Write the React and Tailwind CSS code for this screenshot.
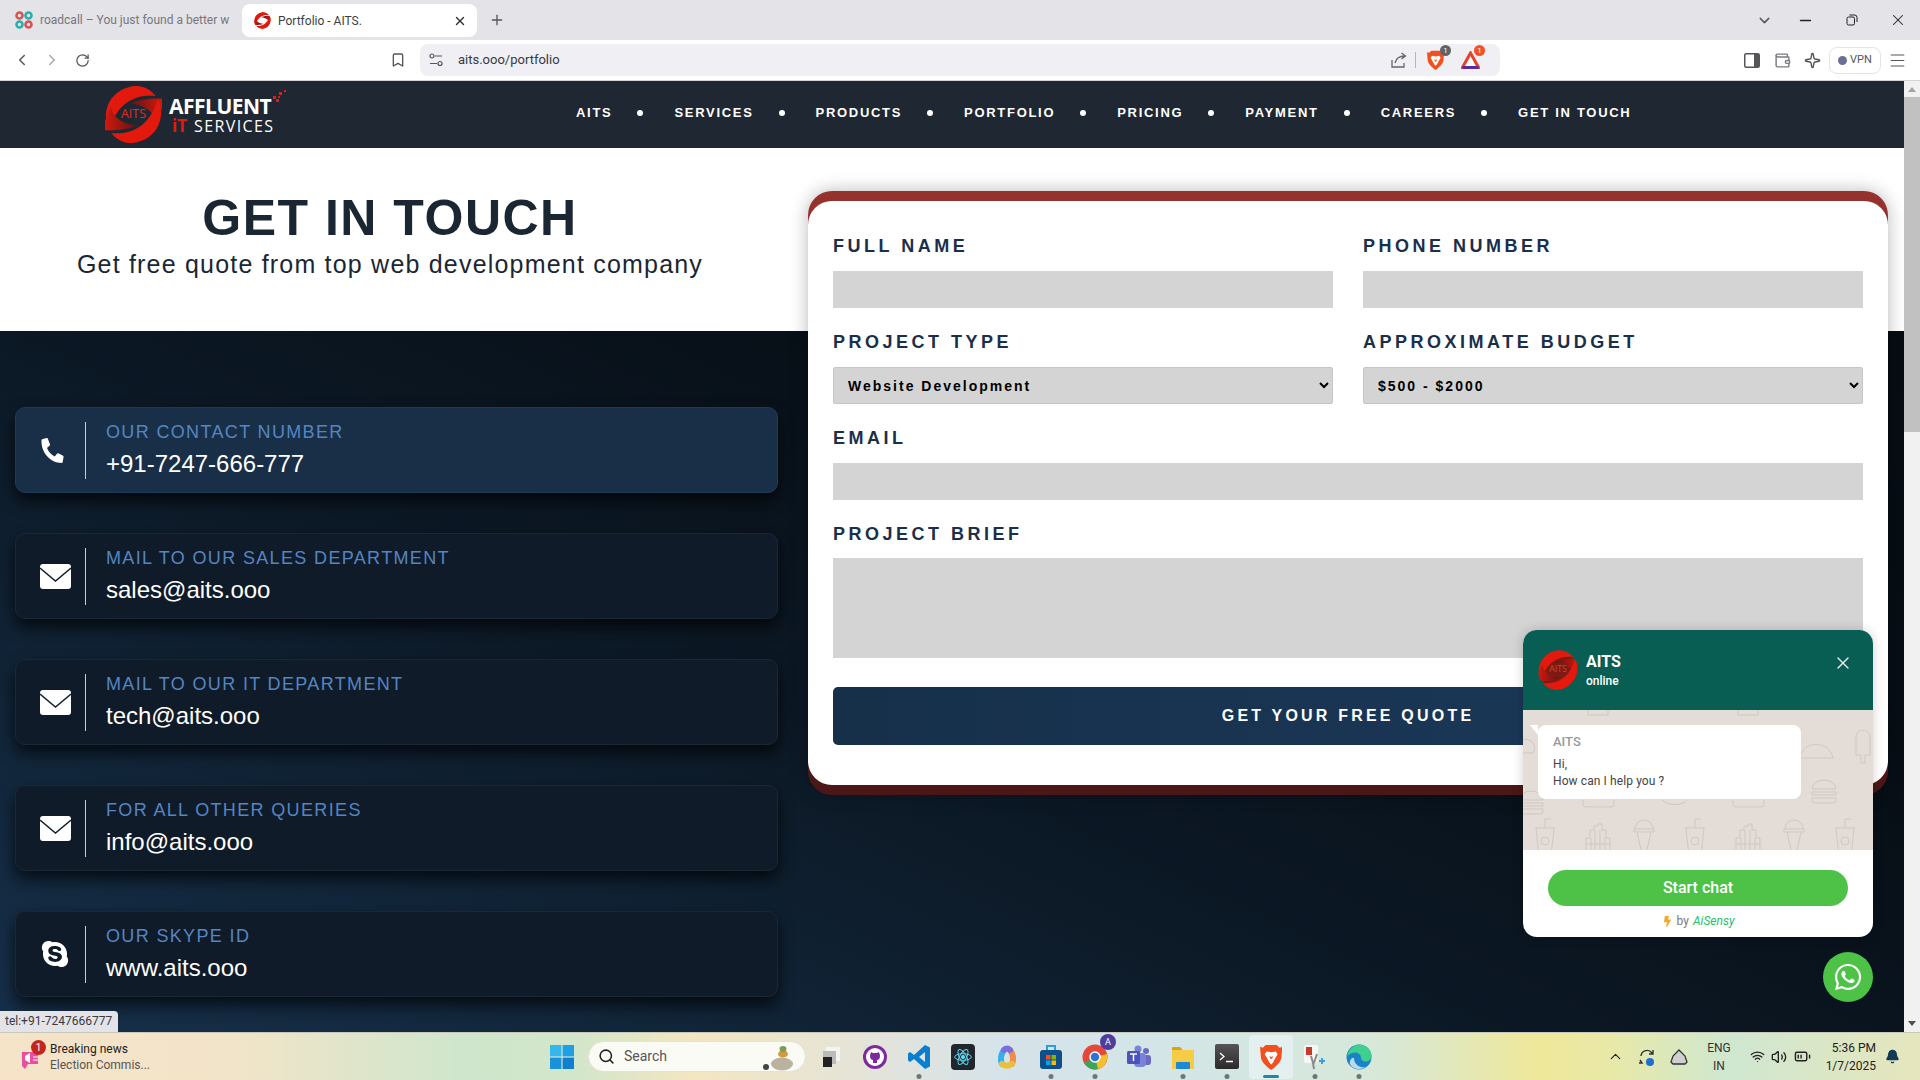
import { FaSkype, FaPhoneAlt, FaWhatsapp, FaBolt } from "react-icons/fa";
import { ChevronLeft, ChevronRight, RotateCw, Bookmark, Plus, X, Minus, ChevronDown, ChevronUp, Search, Volume2, Wifi, BatteryMedium, Bell, Menu, Wallet, Sparkle } from "lucide-react";

const navItems = ["AITS", "SERVICES", "PRODUCTS", "PORTFOLIO", "PRICING", "PAYMENT", "CAREERS", "GET IN TOUCH"];

const contacts = [
  { icon: "phone", label: "OUR CONTACT NUMBER", value: "+91-7247-666-777", active: true },
  { icon: "mail", label: "MAIL TO OUR SALES DEPARTMENT", value: "sales@aits.ooo" },
  { icon: "mail", label: "MAIL TO OUR IT DEPARTMENT", value: "tech@aits.ooo" },
  { icon: "mail", label: "FOR ALL OTHER QUERIES", value: "info@aits.ooo" },
  { icon: "skype", label: "OUR SKYPE ID", value: "www.aits.ooo" },
];

function LogoMark({ size = 58, lens = "none", text = "#e8281a" }) {
  return (
    <div className="relative shrink-0" style={{ width: size, height: size }}>
      <svg width={size} height={size} viewBox="0 0 170 170" className="block">
        <defs>
          <linearGradient id="wing" x1="0" y1="0" x2="1" y2="0">
            <stop offset="0" stopColor="#5c1412" />
            <stop offset="1" stopColor="#d5180c" />
          </linearGradient>
        </defs>
        {lens !== "none" && <circle cx="85" cy="85" r="80" fill={lens} />}
        <g>
          <path d="M12 132C-12 82 10 10 88 0c26-2 50 12 63 30C100 25 40 40 12 132Z" fill="#e3190d" />
          <path d="M72 52c32-12 66-16 98-14 5 24-5 48-20 68 0-26-30-50-78-54Z" fill="url(#wing)" />
        </g>
        <g transform="rotate(180 85 85)">
          <path d="M12 132C-12 82 10 10 88 0c26-2 50 12 63 30C100 25 40 40 12 132Z" fill="#e3190d" />
          <path d="M72 52c32-12 66-16 98-14 5 24-5 48-20 68 0-26-30-50-78-54Z" fill="url(#wing)" />
        </g>
      </svg>
      {size > 20 && (
        <span className="absolute inset-0 flex items-center justify-center font-['Open_Sans',sans-serif]" style={{ color: text, fontSize: size * 0.218 }}>AITS</span>
      )}
    </div>
  );
}

function MailIcon() {
  return (
    <svg width="31" height="25" viewBox="0 0 31 25">
      <rect x="0" y="0" width="31" height="25" rx="3" fill="#fff" />
      <path d="M0 4l15.5 13L31 4" fill="none" stroke="#10202e" strokeWidth="1.4" />
    </svg>
  );
}

function ContactCard({ item }) {
  return (
    <div className={`h-[86px] rounded-[10px] border flex items-center pl-[24px] shadow-[0_8px_16px_rgba(0,0,0,0.7)] ${item.active ? "bg-[#182f47] border-[#1e3a56]" : "bg-[#0f1b28] border-[#1a2836]"}`}>
      <div className="w-[45px] shrink-0 flex items-center text-white">
        {item.icon === "phone" && <FaPhoneAlt size={25} className="scale-x-[0.9]" />}
        {item.icon === "mail" && <MailIcon />}
        {item.icon === "skype" && <FaSkype size={30} />}
      </div>
      <div className="w-px h-[57px] bg-[#c9ced4]" />
      <div className="pl-[20px] pb-[1px]">
        <p className="text-[18px] leading-[22px] tracking-[1.35px] text-[#5585c2]">{item.label}</p>
        <p className="text-[24px] leading-[30px] mt-[6px] text-white">{item.value}</p>
      </div>
    </div>
  );
}

function FormLabel({ children }) {
  return <label className="block h-[24px] leading-[24px] mb-[13px] text-[18px] font-bold tracking-[3.5px] text-[#1a2f4a]">{children}</label>;
}

function TextField({ label }) {
  return (
    <div>
      <FormLabel>{label}</FormLabel>
      <input type="text" className="block w-full h-[37px] bg-[#d4d4d4]" />
    </div>
  );
}

function SelectField({ label, options }) {
  return (
    <div>
      <FormLabel>{label}</FormLabel>
      <select className="block w-full h-[37px] bg-[#d4d4d4] border border-[#c6c6c6] rounded-[2px] pl-[10px] text-[14px] font-bold tracking-[2px] text-black">
        {options.map((o) => <option key={o}>{o}</option>)}
      </select>
    </div>
  );
}

function TaskIcon({ children, dot, active }) {
  return (
    <div className={`relative w-[44px] h-[44px] flex items-center justify-center ${active ? "bg-[#e4f0f0] rounded-[4px]" : ""}`}>
      {children}
      {dot && <span className="absolute bottom-0 left-1/2 -translate-x-1/2 w-[5px] h-[5px] rounded-full bg-[#6f7675]" />}
      {active && <span className="absolute bottom-[1px] left-1/2 -translate-x-1/2 w-[16px] h-[3px] rounded-full bg-[#1c8a9e]" />}
    </div>
  );
}

function BraveIcon({ size = 24 }) {
  return (
    <svg width={size * 0.86} height={size} viewBox="0 0 24 28">
      <path d="M6 1h12l3 3 3-1-1 12c-1 5-7 10-11 13C8 25 2 20 1 15L0 3l3 1Z" fill="#f4501e" />
      <path d="M7 8l5 1 5-1 2 3-3 5-2 4-2 2-2-2-2-4-3-5Z" fill="#fff" />
      <path d="M10 13l2 1 2-1-1 3h-2Z" fill="#f4501e" />
    </svg>
  );
}

function FoodPattern() {
  const cup = (x, y) => (
    <g key={`c${x}${y}`} transform={`translate(${x} ${y})`}>
      <path d="M-10 6h20M-9 6l3 28h12l3-28M0 6V-3h6" />
      <circle cx="0" cy="19" r="4" />
    </g>
  );
  const fries = (x, y) => (
    <g key={`f${x}${y}`} transform={`translate(${x} ${y})`}>
      <path d="M-12 28V14h4V6h4V2h4V0h4v6h4v8h4v14M-7 28V14M-3 28V6M2 28V6M7 28V14M-12 20h24" />
    </g>
  );
  const cone = (x, y) => (
    <g key={`i${x}${y}`} transform={`translate(${x} ${y})`}>
      <path d="M-9 8a9 9 0 0 1 18 0M-10 8h20v3h-20ZM-7 11l5 22h4l5-22" />
    </g>
  );
  const burger = (x, y) => (
    <g key={`b${x}${y}`} transform={`translate(${x} ${y})`}>
      <path d="M-12 0a12 9 0 0 1 24 0ZM-12 3h24v3h-24ZM-12 9h24v2a3 3 0 0 1-3 3h-18a3 3 0 0 1-3-3Z" />
    </g>
  );
  return (
    <svg className="absolute inset-0" width="350" height="140" viewBox="0 0 350 140" fill="none" stroke="#cfc8c1" strokeWidth="1">
      {cup(22, 112)}{fries(75, 114)}{cone(121, 111)}{cup(172, 112)}{fries(225, 114)}{cone(271, 111)}{cup(322, 112)}
      {burger(8, 90)}{burger(301, 79)}
      <path d="M277 48c2-18 30-18 33 0ZM0 43h10c3-5 2-10-4-13-2-1-4-1-6 0" />
      <path d="M333 45V27c0-9 14-9 14 0v18h-5v8h-4v-8Z" />
      <path d="M65 0v5h20V0M215 0v5h20V0" />
      <path d="M60 90v4a3 3 0 0 0 3 3h25a3 3 0 0 0 3-3v-4M210 90v4a3 3 0 0 0 3 3h25a3 3 0 0 0 3-3v-4M140 90c2 6 22 6 24 0" />
    </svg>
  );
}

function ChatWidget() {
  return (
    <div className="absolute left-[1523px] top-[549px] w-[350px] h-[307px] rounded-[14px] overflow-hidden bg-white shadow-[0_0_12px_rgba(0,0,0,0.18)] font-['Roboto',sans-serif]">
      <div className="h-[80px] bg-[#095e54] flex items-center pl-[15px] pr-[20px]">
        <div className="w-[40px] h-[40px] rounded-full overflow-hidden">
          <LogoMark size={40} lens="#7d1a12" text="#d0402f" />
        </div>
        <div className="ml-[8px] mt-[2px] flex-1 text-white">
          <p className="text-[16px] leading-[20px] font-bold">AITS</p>
          <p className="text-[12px] leading-[18px] font-medium">online</p>
        </div>
        <X size={20} className="text-[#e8efee] -mt-[14px]" strokeWidth={1.6} />
      </div>
      <div className="relative h-[140px] bg-[#e4dcd6]">
        <FoodPattern />
        <div className="absolute left-[7px] top-[15px] w-0 h-0 border-t-[10px] border-t-white border-l-[8px] border-l-transparent" />
        <div className="absolute left-[15px] top-[15px] w-[263px] h-[74px] bg-white rounded-[8px] pl-[15px] pt-[8px]">
          <p className="text-[13px] leading-[18px] font-medium text-[#999]">AITS</p>
          <p className="text-[12px] leading-[17px] mt-[5px] tracking-[0.1px] text-[#444]">Hi,<br />How can I help you ?</p>
        </div>
      </div>
      <div className="pt-[20px]">
        <div className="mx-[25px] h-[36px] rounded-full bg-[#4dc247] flex items-center justify-center text-white text-[16px] font-medium">Start chat</div>
        <p className="mt-[6px] flex items-center justify-center gap-[4px] text-[12px] text-[#777]">
          <FaBolt size={11} className="text-[#f7a825]" />by <span className="italic text-[#25c16f]">AiSensy</span>
        </p>
      </div>
    </div>
  );
}

function BrowserChrome() {
  return (
    <div className="shrink-0 font-['Roboto',sans-serif]">
      <div className="h-[40px] bg-[#e3e3e8] flex items-center pl-[14px] pr-[13px]">
        <div className="w-[228px] flex items-center">
          <svg width="18" height="18" viewBox="0 0 18 18" className="shrink-0 ml-[1px]" fill="none" strokeWidth="2.6">
            <circle cx="4.5" cy="4.5" r="3" stroke="#d9534f" />
            <circle cx="13.5" cy="4.5" r="3" stroke="#2bb0ad" />
            <circle cx="4.5" cy="13.5" r="3" stroke="#2bb0ad" />
            <circle cx="13.5" cy="13.5" r="3" stroke="#d9534f" />
          </svg>
          <span className="ml-[7px] text-[12px] text-[#77777c] whitespace-nowrap">roadcall – You just found a better w</span>
        </div>
        <div className="w-[235px] h-[33px] bg-white rounded-[8px] flex items-center pl-[12px] pr-[10px] mt-[1px]">
          <div className="w-[17px] h-[17px] rounded-full overflow-hidden shrink-0"><LogoMark size={17} lens="#fff" /></div>
          <span className="ml-[7px] flex-1 text-[12px] text-[#3d3d42]">Portfolio - AITS.</span>
          <X size={14} strokeWidth={2.4} className="text-[#333]" />
        </div>
        <Plus size={16} className="ml-[12px] text-[#55555a]" />
        <div className="flex-1" />
        <ChevronDown size={17} className="text-[#55555a]" />
        <Minus size={17} className="ml-[24px] text-[#222]" />
        <svg width="12" height="12" viewBox="0 0 12 12" className="ml-[32px]" fill="none" stroke="#222"><rect x="1" y="3" width="7.5" height="8" rx="1.5" /><path d="M3.5 1h5A2.5 2.5 0 0 1 11 3.5V8" /></svg>
        <X size={18} strokeWidth={1.4} className="ml-[31px] text-[#222]" />
      </div>
      <div className="h-[41px] bg-white border-b border-[#d4d4d8] flex items-center pl-[13px]">
        <ChevronLeft size={18} className="text-[#55555a]" />
        <ChevronRight size={18} className="ml-[12px] text-[#a8a8ad]" />
        <RotateCw size={15} className="ml-[14px] text-[#55555a]" />
        <Bookmark size={16} className="ml-[300px] text-[#55555a]" />
        <div className="ml-[14px] w-[1080px] h-[32px] bg-[#efeff4] rounded-[8px] flex items-center pl-[9px] pr-[20px]">
          <svg width="14" height="14" viewBox="0 0 14 14" fill="none" stroke="#55555a" strokeWidth="1.2"><circle cx="3" cy="3" r="2" /><path d="M6 3h7M1 10.500h7" /><circle cx="11" cy="10.500" r="2" /></svg>
          <span className="ml-[15px] flex-1 text-[13px] text-[#3a3a40]">aits.ooo/portfolio</span>
          <svg width="18" height="17" viewBox="0 0 18 17" fill="none" stroke="#66666b" strokeWidth="1.300"><path d="M2 8v7h12v-4M5 11c1-5 4-7 10-7M11.500 1l4 3-4 3" /></svg>
          <span className="ml-[7px] w-px h-[16px] bg-[#b5b5ba]" />
          <div className="relative ml-[11px]">
            <BraveIcon size={20} />
            <span className="absolute -top-[5px] -right-[7px] w-[11px] h-[11px] rounded-full bg-[#62626a] text-white text-[8px] leading-[11px] text-center">1</span>
          </div>
          <div className="relative ml-[17px]">
            <svg width="19" height="18" viewBox="0 0 19 18"><path d="M9.5 2L17.5 16.5H1.5Z" fill="#fff" stroke="#e5432d" strokeWidth="3" /><path d="M1.5 16.5h16" stroke="#5d2a9c" strokeWidth="3" /></svg>
            <span className="absolute -top-[6px] -right-[5px] w-[11px] h-[11px] rounded-full bg-[#f4502c] text-white text-[8px] leading-[11px] text-center">1</span>
          </div>
        </div>
        <svg width="16" height="15" viewBox="0 0 16 15" className="ml-[244px]" fill="none"><rect x="0.75" y="0.75" width="14.5" height="13.5" rx="1.5" stroke="#55555a" strokeWidth="1.5" /><rect x="10" y="1" width="5" height="13" fill="#55555a" /></svg>
        <Wallet size={17} className="ml-[14px] text-[#7a7a80]" />
        <Sparkle size={17} className="ml-[13px] text-[#55555a]" />
        <div className="ml-[8px] w-[52px] h-[27px] rounded-[8px] border border-[#e3e3e8] flex items-center justify-center gap-[3px]">
          <span className="w-[9px] h-[9px] rounded-full bg-[#6c6f94]" />
          <span className="text-[11px] text-[#55555a]">VPN</span>
        </div>
        <Menu size={19} strokeWidth={1.4} className="ml-[7px] text-[#55555a]" />
      </div>
    </div>
  );
}

function Taskbar() {
  return (
    <div className="shrink-0 h-[48px] flex items-center border-t border-[#c8c8b8] bg-[linear-gradient(90deg,#f6e3c8_0%,#f2e4c8_12%,#cfe6cc_24%,#d2e6cb_30%,#f3e6c0_36%,#e6e4d6_44%,#d6e3ea_52%,#d3e6e6_62%,#d8e8d8_72%,#efe89a_80%,#e8e9a8_84%,#cfe7d0_90%,#e6e6bc_100%)] font-['Roboto',sans-serif]">
      <div className="w-[550px] pl-[20px] flex items-center shrink-0">
        <div className="relative w-[30px] h-[30px] shrink-0">
          <svg width="22" height="24" viewBox="0 0 22 24" className="absolute left-0 top-[5px]"><path d="M2 5h16v12H8l-3 5-3-3Z" fill="#e84fa0" /><path d="M5 9l5-3v10l-5-3Z" fill="#fff" /><path d="M13 10h5M13 13h5" stroke="#fff" /></svg>
          <span className="absolute left-[11px] top-[-2px] w-[15px] h-[15px] rounded-full bg-[#c4261d] text-white text-[10px] leading-[15px] text-center">1</span>
        </div>
        <div className="ml-[0px] text-[12px] leading-[16px] text-[#222]">
          <p>Breaking news</p>
          <p className="text-[#555]">Election Commis...</p>
        </div>
      </div>
      <svg width="24" height="24" viewBox="0 0 24 24" className="shrink-0"><rect width="11.4" height="11.4" fill="#36b6ef" /><rect x="12.6" width="11.4" height="11.4" fill="#1f9fe6" /><rect y="12.6" width="11.4" height="11.4" fill="#1b90db" /><rect x="12.6" y="12.6" width="11.4" height="11.4" fill="#0f7fcf" /></svg>
      <div className="ml-[14px] w-[218px] h-[31px] rounded-full bg-[#fbfbf5] border border-[#e2e2d6] flex items-center pl-[9px] pr-[10px]">
        <Search size={17} strokeWidth={2.2} className="text-[#222]" />
        <span className="ml-[9px] flex-1 text-[14px] text-[#555]">Search</span>
        <svg width="36" height="28" viewBox="0 0 36 28"><ellipse cx="23" cy="21" rx="11" ry="6.5" fill="#b9b29f" /><ellipse cx="24" cy="11" rx="5" ry="3.5" fill="#d19a3e" /><ellipse cx="24" cy="6" rx="3.5" ry="3" fill="#7f9b5a" /><circle cx="7" cy="24" r="3" fill="#444" /></svg>
      </div>
      <div className="ml-[3px] flex items-center">
        <TaskIcon><svg width="22" height="22" viewBox="0 0 22 22"><rect x="6" y="1" width="14" height="14" rx="1" fill="#f4f4f0" /><rect x="3" y="5" width="13" height="13" fill="#bbb" /><rect x="3" y="11" width="9" height="10" fill="#222" /></svg></TaskIcon>
        <TaskIcon><svg width="24" height="24" viewBox="0 0 24 24"><circle cx="12" cy="12" r="10.5" fill="#fff" stroke="#7c2a9e" strokeWidth="3" /><path d="M7 11c0-2 1-3 1-4l2 1h4l2-1c0 1 1 2 1 4 0 3-2 4-3 4v3h-4v-3c-1 0-3-1-3-4Z" fill="#7c2a9e" /></svg></TaskIcon>
        <TaskIcon dot><svg width="24" height="26" viewBox="0 0 24 26"><path d="M18 1l5 2.5v19L18 25 7 15l-4 3-2-1.5V9.500L3 8l4 3Zm0 7l-6 5 6 5Z" fill="#0a7fd0" /></svg></TaskIcon>
        <TaskIcon><div className="w-[24px] h-[26px] rounded-[4px] bg-[#20262c] flex items-center justify-center"><svg width="20" height="20" viewBox="-12 -12 24 24" fill="none" stroke="#5fd3ee" strokeWidth="1.2"><ellipse rx="10" ry="4" /><ellipse rx="10" ry="4" transform="rotate(60)" /><ellipse rx="10" ry="4" transform="rotate(120)" /><circle r="2" fill="#5fd3ee" /></svg></div></TaskIcon>
        <TaskIcon><svg width="24" height="24" viewBox="0 0 24 24" fill="none" strokeWidth="6" strokeLinecap="round"><path d="M9 5C6 9 5 14 7 19" stroke="#35b0e8" /><path d="M15 5c3 4 4 9 2 14" stroke="#f28a4a" /><path d="M9 5c2-2 4-2 6 0" stroke="#7a6fe0" /><path d="M7 19c3 2 7 2 10 0" stroke="#e8c040" /></svg></TaskIcon>
        <TaskIcon dot><svg width="24" height="26" viewBox="0 0 24 26"><path d="M8 6V2h8v4" fill="none" stroke="#2a9fd8" strokeWidth="2" /><rect x="1" y="6" width="22" height="19" rx="3" fill="#0d4f86" /><rect x="7" y="11" width="4.500" height="4.500" fill="#f25022" /><rect x="12.500" y="11" width="4.500" height="4.500" fill="#7fba00" /><rect x="7" y="16.500" width="4.500" height="4.500" fill="#00a4ef" /><rect x="12.500" y="16.500" width="4.500" height="4.500" fill="#ffb900" /></svg></TaskIcon>
        <TaskIcon dot>
          <div className="relative">
            <svg width="26" height="26" viewBox="0 0 26 26"><circle cx="13" cy="13" r="12.500" fill="#e5483a" /><path d="M13 13L2 19A12.500 12.500 0 0 0 16 25Z" fill="#3ba55a" /><path d="M13 13l3 12A12.500 12.500 0 0 0 25 10Z" fill="#f6c02c" /><circle cx="13" cy="13" r="5" fill="#2c74d8" stroke="#fff" strokeWidth="1.5" /></svg>
            <span className="absolute -top-[10px] -right-[8px] w-[16px] h-[16px] rounded-full bg-[#4c3d9e] text-white text-[9px] leading-[16px] text-center">A</span>
          </div>
        </TaskIcon>
        <TaskIcon><svg width="26" height="24" viewBox="0 0 26 24"><circle cx="20" cy="6" r="3" fill="#6d6ac4" /><rect x="16" y="10" width="9" height="10" rx="3" fill="#6d6ac4" /><circle cx="12" cy="4" r="3.500" fill="#7b83d6" /><rect x="8" y="8" width="12" height="14" rx="4" fill="#7b83d6" /><rect x="1" y="6" width="13" height="13" rx="1.500" fill="#4b53bc" /><path d="M4 9h7M7.500 9v7" stroke="#fff" strokeWidth="1.500" /></svg></TaskIcon>
        <TaskIcon dot><svg width="24" height="26" viewBox="0 0 24 26"><path d="M1 4a1 1 0 0 1 1-1h7l2 2v4H1Z" fill="#d9a020" /><rect x="1" y="6" width="22" height="19" fill="#f7cc45" /><rect x="5" y="18" width="14" height="7" rx="1" fill="#1e88d8" /></svg></TaskIcon>
        <TaskIcon dot><div className="w-[24px] h-[25px] rounded-[2px] bg-[linear-gradient(#555,#2a2a2a)] flex items-center pl-[4px]"><svg width="15" height="12" viewBox="0 0 15 12" fill="none" stroke="#fff" strokeWidth="1.300"><path d="M1 2l4 3.500L1 9M7 10.500h7" /></svg></div></TaskIcon>
        <TaskIcon active><BraveIcon size={26} /></TaskIcon>
        <TaskIcon dot><svg width="24" height="26" viewBox="0 0 24 26"><rect x="1" y="1" width="14" height="18" rx="2" fill="#f6f6f6" /><path d="M3 3h6v8H3Z" fill="#c8392b" /><path d="M8 12l2 7 1 6M14 10l-3 9" stroke="#8a8a8a" strokeWidth="2" fill="none" /><path d="M16 17h6M19 14v6" stroke="#3aa0e0" strokeWidth="2" /></svg></TaskIcon>
        <TaskIcon dot><svg width="26" height="26" viewBox="0 0 26 26"><circle cx="13" cy="13" r="12.500" fill="#1a82c8" /><path d="M13 .5c7 0 12.500 5 12.500 11 0 4-3 6-6 6-3 0-4.500-2-4.500-4 0-3-3-5-6-5-4 0-8 3-8 5C2 6 7 .500 13 .500Z" fill="#3fcf8e" /><path d="M8 14c0 6 5 10 11 9-3 3-12 3-15-3-1-3 2-7 4-6Z" fill="#fff" opacity="0.700" /></svg></TaskIcon>
      </div>
      <div className="flex-1" />
      <div className="flex items-center text-[#222] pr-[20px]">
        <ChevronUp size={17} strokeWidth={1.7} />
        <svg width="18" height="20" viewBox="0 0 18 20" className="ml-[14px]" fill="none" stroke="#333" strokeWidth="1.400"><path d="M3 9a6 6 0 0 1 10-4l2 2M15 3v4h-4M2 13l2 3h-3" /><circle cx="12" cy="15" r="4" fill="#1f6fd0" stroke="none" /></svg>
        <svg width="18" height="16" viewBox="0 0 18 16" className="ml-[14px]"><path d="M9 1l6 6 2 6-2 2H3l-2-2 2-6Z" fill="#cfcfcf" stroke="#333" strokeWidth="1.300" /></svg>
        <div className="ml-[10px] w-[42px] text-center text-[12px] leading-[18px] text-[#333]"><p>ENG</p><p>IN</p></div>
        <Wifi size={15} className="ml-[10px]" />
        <Volume2 size={16} className="ml-[6px]" />
        <BatteryMedium size={17} className="ml-[7px]" />
        <div className="ml-[8px] w-[57px] text-right text-[12px] leading-[18px] text-[#222]"><p>5:36 PM</p><p>1/7/2025</p></div>
        <Bell size={15} fill="#123a55" className="ml-[9px] text-[#123a55]" />
      </div>
    </div>
  );
}

export default function App() {
  return (
    <div className="relative w-[1920px] h-[1080px] overflow-hidden flex flex-col font-['Liberation_Sans',Arial,sans-serif]">
      <BrowserChrome />

      <div className="relative flex-1 flex min-h-0">
        <div className="flex-1 min-w-0 flex flex-col bg-white">
          <header className="h-[67px] shrink-0 bg-[#1f2733] flex items-center pl-[105px]">
            <LogoMark size={57} />
            <div className="relative ml-[7px] w-[117px] text-white font-['Open_Sans',sans-serif]">
              <p className="text-[21px] leading-[23px] font-bold tracking-[-0.5px]">AFFLUENT</p>
              <p className="-mt-[1px] flex items-baseline text-[16px] leading-[17px] whitespace-nowrap">
                <span className="ml-[3px] text-[17px] font-bold text-[#e3190d]">iT</span>
                <span className="ml-[7px] tracking-[1.4px]">SERVICES</span>
              </p>
              <svg width="14" height="12" viewBox="0 0 14 12" className="absolute left-[104px] -top-[5px]" fill="#d9211a"><rect x="0" y="6" width="3" height="3" /><rect x="3" y="9" width="3" height="3" /><rect x="6" y="2" width="3" height="3" /><rect x="11" y="0" width="2" height="2" /><rect x="5" y="6" width="2" height="2" /></svg>
            </div>
            <nav className="ml-[290px] pb-[4px] flex items-center text-white text-[13px] font-bold tracking-[1.7px]">
              {navItems.map((item, i) => (
                <div key={item} className="flex items-center">
                  <span>{item}</span>
                  {i < navItems.length - 1 && <span className="ml-[25px] mr-[31px] w-[6px] h-[6px] rounded-full bg-white" />}
                </div>
              ))}
            </nav>
          </header>

          <section className="h-[183px] shrink-0 w-[780px] text-center pt-[35px]">
            <h1 className="text-[50px] leading-[70px] font-bold tracking-[1.5px] text-[#1b2633]">GET IN TOUCH</h1>
            <p className="-mt-[5px] text-[25px] leading-[32px] tracking-[1.2px] text-[#1b2633]">Get free quote from top web development company</p>
          </section>

          <section className="flex-1 min-h-0 flex bg-[linear-gradient(25deg,#16304a_0%,#0c1926_42%,#070e15_72%,#060c12_100%)]">
            <div className="w-[763px] ml-[15px] shrink-0 pt-[76px] flex flex-col gap-[40px]">
              {contacts.map((item) => <ContactCard key={item.label} item={item} />)}
            </div>
            <div className="ml-[30px] w-[1080px] h-[604px] -mt-[140px] rounded-[24px] bg-[linear-gradient(#96322e_0%,#96322e_40%,#4a1616_100%)] py-[10px] shadow-[0_0_18px_rgba(0,0,0,0.28)]">
              <form className="h-[584px] rounded-[24px] bg-white px-[25px] pt-[33px] grid grid-cols-2 gap-x-[30px] gap-y-[22px] content-start">
                <TextField label="FULL NAME" />
                <TextField label="PHONE NUMBER" />
                <SelectField label="PROJECT TYPE" options={["Website Development"]} />
                <SelectField label="APPROXIMATE BUDGET" options={["$500 - $2000"]} />
                <div className="col-span-2"><TextField label="EMAIL" /></div>
                <div className="col-span-2">
                  <FormLabel>PROJECT BRIEF</FormLabel>
                  <textarea className="block w-full h-[100px] -mt-[1px] bg-[#d4d4d4] resize-none" />
                </div>
                <button type="button" className="col-span-2 mt-[7px] h-[58px] rounded-[5px] bg-[linear-gradient(90deg,#16304a,#1c3a5c)] text-white text-[16px] font-bold tracking-[3.2px]">GET YOUR FREE QUOTE</button>
              </form>
            </div>
          </section>
        </div>

        <div className="w-[16px] shrink-0 bg-[#f1f1f1] flex flex-col items-center">
          <span className="mt-[6px] w-0 h-0 border-x-[4px] border-x-transparent border-b-[5px] border-b-[#a3a3a3]" />
          <div className="mt-[5px] w-full h-[335px] bg-[#c1c1c1]" />
          <div className="flex-1" />
          <span className="mb-[6px] w-0 h-0 border-x-[4px] border-x-transparent border-t-[5px] border-t-[#505050]" />
        </div>

        <ChatWidget />

        <div className="absolute left-[1823px] top-[871px] w-[50px] h-[50px] rounded-full bg-[#4dc247] flex items-center justify-center text-white">
          <FaWhatsapp size={30} />
        </div>

        <div className="absolute left-0 bottom-0 w-[118px] h-[21px] bg-[#e3e3e8] rounded-tr-[4px] pl-[5px] text-[12px] leading-[21px] text-[#3a3a40] font-['Roboto',sans-serif]">tel:+91-7247666777</div>
      </div>

      <Taskbar />
    </div>
  );
}
